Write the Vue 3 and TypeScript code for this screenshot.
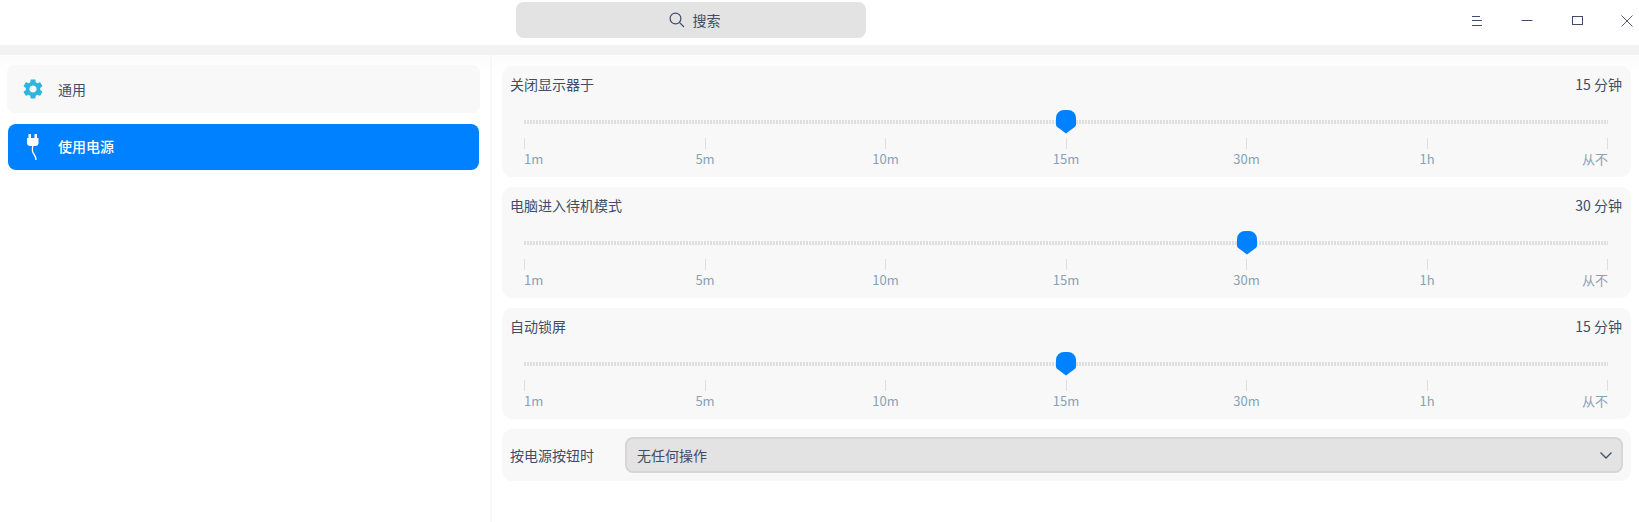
<script setup lang="ts">
interface Mark { label: string }
interface Row { title: string; value: string; position: number }

const marks: Mark[] = ['1m', '5m', '10m', '15m', '30m', '1h', '从不'].map((label) => ({ label }))
const rows: Row[] = [
  { title: '关闭显示器于', value: '15 分钟', position: 3 },
  { title: '电脑进入待机模式', value: '30 分钟', position: 4 },
  { title: '自动锁屏', value: '15 分钟', position: 3 },
]
const thumbLeft = (p: number): string => `${(p / (marks.length - 1)) * 100}%`
</script>

<template>
  <div class="window">
    <header class="titlebar">
      <div class="search">
        <svg class="search-icon" width="16" height="16" viewBox="0 0 16 16" fill="none" stroke="#414d68" stroke-width="1.2">
          <circle cx="6.5" cy="6.5" r="5.4" />
          <path d="M10.4 10.4 15 15" />
        </svg>
        <span>搜索</span>
      </div>
      <div class="controls">
        <svg width="12" height="12" viewBox="0 0 12 12" fill="none" stroke="#414d68" stroke-width="1">
          <path d="M1 1.5h8M1 5.500h10M1 10.500h10" />
        </svg>
        <svg width="12" height="12" viewBox="0 0 12 12" fill="none" stroke="#414d68" stroke-width="1">
          <path d="M0.5 5.5h11" />
        </svg>
        <svg width="12" height="12" viewBox="0 0 12 12" fill="none" stroke="#414d68" stroke-width="1">
          <rect x="1.5" y="1.5" width="10" height="8" />
        </svg>
        <svg width="12" height="12" viewBox="0 0 12 12" fill="none" stroke="#414d68" stroke-width="0.9">
          <path d="M0.5 0.5 11.5 11.5M11.5 0.5 0.5 11.5" />
        </svg>
      </div>
    </header>
    <div class="band"></div>
    <div class="body">
      <aside class="sidebar">
        <div class="nav-item">
          <svg class="gear" width="20" height="20" viewBox="2 2 20 20">
            <path fill="#2fb5dd" d="M19.14 12.94c.04-.3.06-.61.06-.94 0-.32-.02-.64-.07-.94l2.03-1.58c.18-.14.23-.41.12-.61l-1.92-3.32c-.12-.22-.37-.29-.59-.22l-2.39.96c-.5-.38-1.03-.7-1.62-.94l-.36-2.54c-.04-.24-.24-.41-.48-.41h-3.84c-.24 0-.43.17-.47.41l-.36 2.54c-.59.24-1.13.57-1.62.94l-2.39-.96c-.22-.08-.47 0-.59.22L2.74 8.87c-.12.21-.08.47.12.61l2.03 1.58c-.05.3-.09.63-.09.94s.02.64.07.94l-2.03 1.58c-.18.14-.23.41-.12.61l1.92 3.32c.12.22.37.29.59.22l2.39-.96c.5.38 1.03.7 1.62.94l.36 2.54c.05.24.24.41.48.41h3.84c.24 0 .44-.17.47-.41l.36-2.54c.59-.24 1.13-.56 1.62-.94l2.39.96c.22.08.47 0 .59-.22l1.92-3.32c.12-.22.07-.47-.12-.61l-2.01-1.58zM12 15.6c-1.98 0-3.6-1.62-3.6-3.6s1.62-3.6 3.6-3.6 3.6 1.62 3.6 3.6-1.62 3.6-3.6 3.6z" />
          </svg>
          <span>通用</span>
        </div>
        <div class="nav-item active">
          <svg class="plug" width="12" height="26" viewBox="0 0 12 26" fill="none">
            <path fill="#fff" d="M1.500 0h2.500v4H1.500zM7.500 0H10v4H7.500zM0 4h11.500v4.500a3.500 3.500 0 0 1-3.500 3.500H3.500A3.500 3.500 0 0 1 0 8.500z" />
            <path stroke="#fff" stroke-width="1.300" d="M5.800 12C4.800 16 5.300 18 6.800 20 8.300 22 9 24 9 26" />
          </svg>
          <span>使用电源</span>
        </div>
      </aside>
      <main class="content">
        <section v-for="row in rows" :key="row.title" class="card">
          <div class="card-head">
            <span>{{ row.title }}</span>
            <span>{{ row.value }}</span>
          </div>
          <div class="slider">
            <div class="rail">
              <div class="track"></div>
              <svg class="thumb" :style="{ left: thumbLeft(row.position) }" width="20" height="24" viewBox="0 0 20 24">
                <path fill="#0081ff" d="M8 0h4a8 8 0 0 1 8 8v6.500c0 1-.5 1.800-1.300 2.400L10 23.500 1.300 16.900C.5 16.300 0 15.500 0 14.500V8a8 8 0 0 1 8-8z" />
              </svg>
            </div>
            <div class="marks">
              <div v-for="mark in marks" :key="mark.label" class="mark">
                <i class="tick"></i>
                <span class="mark-label">{{ mark.label }}</span>
              </div>
            </div>
          </div>
        </section>
        <section class="card action">
          <span class="action-label">按电源按钮时</span>
          <div class="select">
            <span>无任何操作</span>
            <svg width="12" height="7" viewBox="0 0 12 7" fill="none" stroke="#414d68" stroke-width="1.3">
              <path d="M0.5 0.500 6 6l5.500-5.500" />
            </svg>
          </div>
        </section>
      </main>
    </div>
  </div>
</template>

<style>
html, body { margin: 0; background: #fff; }
</style>

<style scoped>
.window {
  width: 1639px;
  height: 522px;
  overflow: hidden;
  background: #fff;
  color: #414d68;
  font-family: "Noto Sans CJK SC", "Noto Sans", sans-serif;
  font-size: 14px;
  line-height: 20px;
  display: flex;
  flex-direction: column;
}
.titlebar {
  height: 45px;
  flex: none;
  display: flex;
  justify-content: space-between;
  padding: 2px 6px 0 516px;
  box-sizing: border-box;
}
.search {
  width: 350px;
  height: 36px;
  border-radius: 8px;
  background: #e3e3e3;
  display: flex;
  align-items: center;
  justify-content: center;
  gap: 8px;
  padding-left: 7px;
  box-sizing: border-box;
}
.search-icon { flex: none; }
.controls {
  display: flex;
  gap: 38px;
  height: 12px;
  margin-top: 13px;
}
.band {
  height: 10px;
  flex: none;
  background: #f2f2f2;
}
.body {
  flex: 1;
  display: flex;
  min-height: 0;
  background: linear-gradient(#fcfcfc, #fff 20px);
}
.sidebar {
  width: 490px;
  flex: none;
  border-right: 2px solid #f8f8f8;
  padding: 10px 0 0;
  display: flex;
  flex-direction: column;
  gap: 11px;
}
.nav-item {
  margin: 0 10px 0 7px;
  height: 48px;
  border-radius: 8px;
  background: #f8f8f8;
  display: flex;
  align-items: center;
  padding-left: 16px;
  box-sizing: border-box;
}
.nav-item span { margin-left: 15px; }
.nav-item.active {
  margin: 0 11px 0 8px;
  height: 46px;
  background: #0081ff;
  color: #fff;
  font-weight: 500;
  padding: 0 0 2px 19px;
}
.nav-item.active span { margin-left: 19px; }
.plug { margin-top: 2px; }
.content {
  flex: 1;
  min-width: 0;
  padding: 11px 8px 0 10px;
  display: flex;
  flex-direction: column;
  gap: 10px;
}
.card {
  background: #f8f8f8;
  border-radius: 10px;
  padding: 8px 9px 10px 8px;
}
.card-head {
  display: flex;
  justify-content: space-between;
}
.slider {
  margin: 14px 14px 0 14px;
}
.rail {
  position: relative;
  height: 28px;
  display: flex;
  align-items: center;
}
.track {
  width: 100%;
  height: 4px;
  background: repeating-linear-gradient(90deg, #dedede 0 2px, transparent 2px 3px);
}
.thumb {
  position: absolute;
  top: 2px;
  transform: translateX(-10px);
}
.marks {
  display: flex;
  justify-content: space-between;
  margin-top: 2px;
  height: 29px;
}
.mark {
  width: 1px;
  display: flex;
  flex-direction: column;
  align-items: center;
}
.mark:first-child { align-items: flex-start; }
.mark:last-child { align-items: flex-end; }
.tick {
  display: block;
  flex: none;
  width: 1px;
  height: 11px;
  background: #dedede;
}
.mark-label {
  margin-top: 2px;
  font-size: 13px;
  line-height: 16px;
  color: #8aa1b4;
  white-space: nowrap;
}
.action {
  height: 52px;
  padding: 0 8px;
  display: flex;
  align-items: center;
  box-sizing: border-box;
}
.action-label {
  width: 115px;
  flex: none;
}
.select {
  flex: 1;
  height: 36px;
  box-sizing: border-box;
  border: 2px solid #d6d6d6;
  border-radius: 8px;
  background: #e3e3e3;
  display: flex;
  align-items: center;
  justify-content: space-between;
  padding: 0 9px 0 10px;
}
</style>
